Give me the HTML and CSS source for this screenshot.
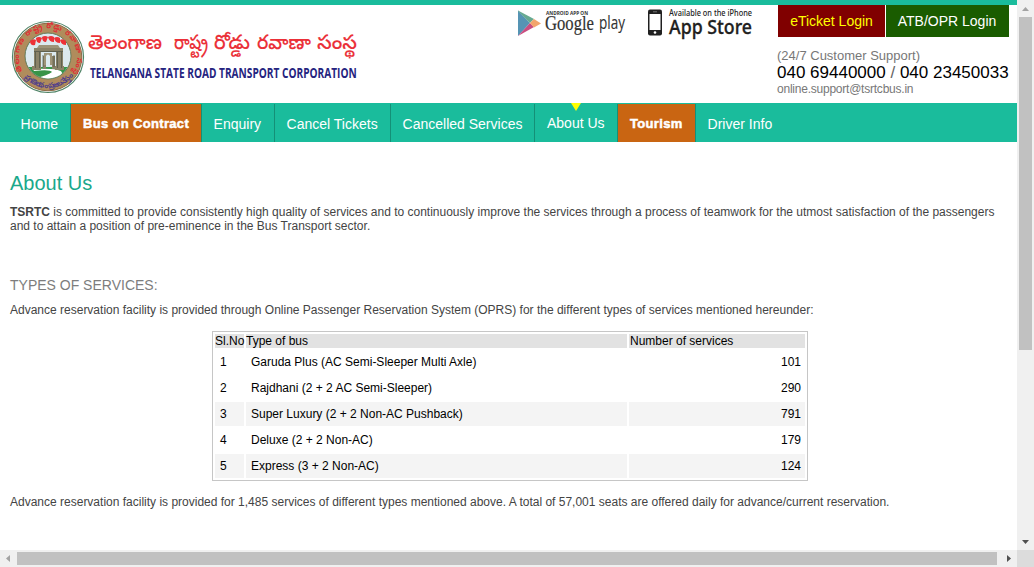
FILE: index.html
```html
<!DOCTYPE html>
<html lang="en">
<head>
<meta charset="utf-8">
<title>About Us - TSRTC</title>
<link rel="stylesheet" href="styles.css">
</head>
<body>
<div class="viewport">
<div class="page">
  <header class="header">
    <svg class="brand" width="370" height="98" viewBox="0 5 370 98">
      <defs>
        <path id="ringTop" d="M22.500 71 A29 29 0 1 1 73.500 71"/>
        <path id="ringBottom" d="M19 69.500 A32 32 0 0 0 77 69.500"/>
        <clipPath id="scene"><circle cx="48" cy="56" r="22.500"/></clipPath>
      </defs>
      <circle cx="48" cy="57" r="35.500" fill="#fff" stroke="#508467" stroke-width="1.200"/>
      <circle cx="48" cy="57" r="33.800" fill="#b08c5c" stroke="#8b6845"/>
      <circle cx="48" cy="56" r="23" fill="#dce9ee" stroke="#647b58"/>
      <g clip-path="url(#scene)">
        <path d="M24 67H72V80H24z" fill="#379447"/>
        <path d="M33 79Q49 75 52 72Q50 69 34 71L33 69Q62 68 62 73Q62 77 54 80z" fill="#fff"/>
        <path d="M34 48h29v4H34zM34 52h7v17h-7zM43 56h3v13h-3zM52 56h3v13h-3zM56 52h7v17h-7zM32 66h9v4h-9zM55 66h9v4h-9z" fill="#8a8268"/>
        <path d="M37 48h23l-2-3H39zM44 53h8v12h-2v-9q-2-3-4 0v9h-2z" fill="#9e9478"/>
        <path d="M35.500 52v16M39.500 52v16M43 55v12M54 55v12M57.500 52v16M61.500 52v16M34 51.500h29" stroke="#4d5345" stroke-width=".7"/>
      </g>
      <g fill="#ed3137"><path d="M30 41q3-3 6-1l-1 5q-5 1-5-4zM36 38q3-2 6 0l-2 5q-4 0-4-5zM42 37q3-2 6 0l-2 5q-4 0-4-5zM48 37q3-2 6 0v5q-5 0-6-5zM54 38q3-2 6 0v5q-5 0-6-5zM60 40q3-2 6 1v4q-5 0-6-5z"/></g>
      <text class="seal-text" fill="#e02d34"><textPath href="#ringTop" textLength="122">తెలంగాణ రాష్ట్ర రోడ్డు రవాణా సంస్థ</textPath></text>
      <text class="seal-text" fill="#51408b"><textPath href="#ringBottom" startOffset="8" textLength="56">ప్రగతి రథం · ప్రజల నేస్తం</textPath></text>
      <text class="telugu" x="88" y="49" textLength="74" lengthAdjust="spacingAndGlyphs">తెలంగాణ</text>
      <text class="telugu" x="174" y="49" textLength="34" lengthAdjust="spacingAndGlyphs">రాష్ట్ర</text>
      <text class="telugu" x="214" y="49" textLength="36" lengthAdjust="spacingAndGlyphs">రోడ్డు</text>
      <text class="telugu" x="257" y="49" textLength="54" lengthAdjust="spacingAndGlyphs">రవాణా</text>
      <text class="telugu" x="317" y="49" textLength="40" lengthAdjust="spacingAndGlyphs">సంస్థ</text>
      <text class="corp" transform="translate(90 78) scale(.78 1)" textLength="342" lengthAdjust="spacingAndGlyphs">TELANGANA STATE ROAD TRANSPORT CORPORATION</text>
    </svg>
    <svg class="stores" width="240" height="38" viewBox="516 5 240 38">
      <path d="M518 10.500V36l12-13z" fill="#5594b4"/>
      <path d="M518 10.500L534 19l-4 4-12-12z" fill="#67aa91"/>
      <path d="M518 36l12-13 4 4z" fill="#c94d80"/>
      <path d="M530 23l4-4 7 4.500-7 4z" fill="#f2a56c"/>
      <text class="android" x="546" y="14.500" textLength="42" lengthAdjust="spacingAndGlyphs">ANDROID APP ON</text>
      <text class="google" x="545" y="30" textLength="49" lengthAdjust="spacingAndGlyphs">Google</text>
      <text class="play" x="599" y="29" textLength="26" lengthAdjust="spacingAndGlyphs">play</text>
      <rect x="648" y="9.500" width="14" height="26" rx="2" fill="#202020"/>
      <rect x="649.500" y="14" width="11" height="16" fill="#fff"/>
      <path d="M653 11.800h4" stroke="#aaa" stroke-width=".6"/><circle cx="655" cy="32.500" r="1.300" fill="#fff"/>
      <text class="available" x="669" y="15.500" textLength="83" lengthAdjust="spacingAndGlyphs">Available on the iPhone</text>
      <text class="appstore" x="669" y="34" textLength="83" lengthAdjust="spacingAndGlyphs">App Store</text>
    </svg>
    <div class="account">
      <div class="logins"><a class="login eticket">eTicket Login</a><a class="login atb">ATB/OPR Login</a></div>
      <div class="support">(24/7 Customer Support)</div>
      <div class="phone">040 69440000 <span>/</span> 040 23450033</div>
      <div class="email">online.support@tsrtcbus.in</div>
    </div>
  </header>
  <nav class="nav">
    <a class="home">Home</a><a class="special contract">Bus on Contract</a><a class="enquiry">Enquiry</a><a class="cancel">Cancel Tickets</a><a class="cancelled">Cancelled Services</a><a class="about">About Us</a><a class="special tourism">Tourism</a><a class="driver">Driver Info</a>
  </nav>
  <main class="content">
    <h1>About Us</h1>
    <p class="intro"><b>TSRTC</b> is committed to provide consistently high quality of services and to continuously improve the services through a process of teamwork for the utmost satisfaction of the passengers<br>and to attain a position of pre-eminence in the Bus Transport sector.</p>
    <h2>TYPES OF SERVICES:</h2>
    <p class="lead">Advance reservation facility is provided through Online Passenger Reservation System (OPRS) for the different types of services mentioned hereunder:</p>
    <table class="services">
      <colgroup><col class="col-no"><col class="col-type"><col class="col-count"></colgroup>
      <tr class="head"><td>Sl.No</td><td>Type of bus</td><td>Number of services</td></tr>
      <tr><td>1</td><td>Garuda Plus (AC Semi-Sleeper Multi Axle)</td><td>101</td></tr>
      <tr><td>2</td><td>Rajdhani (2 + 2 AC Semi-Sleeper)</td><td>290</td></tr>
      <tr class="alt"><td>3</td><td>Super Luxury (2 + 2 Non-AC Pushback)</td><td>791</td></tr>
      <tr><td>4</td><td>Deluxe (2 + 2 Non-AC)</td><td>179</td></tr>
      <tr class="alt"><td>5</td><td>Express (3 + 2 Non-AC)</td><td>124</td></tr>
    </table>
    <p class="summary">Advance reservation facility is provided for 1,485 services of different types mentioned above. A total of 57,001 seats are offered daily for advance/current reservation.</p>
  </main>
</div>
<div class="vbar"><svg width="17" height="17"><path d="M5 11h7L8.500 7z" fill="#a3a3a3"/></svg><div class="vthumb"></div><svg class="down" width="17" height="17"><path d="M5 7h7l-3.500 4z" fill="#505050"/></svg></div>
<div class="hbar"><svg width="17" height="17"><path d="M10 5v7L6 8.500z" fill="#a3a3a3"/></svg><div class="hthumb"></div><svg class="right" width="17" height="17"><path d="M7 5v7l4-3.500z" fill="#505050"/></svg></div>
<div class="corner"></div>
</div>
</body>
</html>
```

FILE: styles.css
```css
* { box-sizing: border-box; }
body { margin: 0; overflow: hidden; font-family: "Liberation Sans", Arial, sans-serif; font-size: 12px; color: #444; background: #fff; }
.viewport { display: grid; grid-template: 550px 17px / 1017px 17px; width: 1034px; height: 567px; }
.page { overflow: hidden; }
.header { display: flex; height: 103px; border-top: 5px solid #1abc9c; }
.brand { display: block; margin-right: 146px; flex: none; overflow: visible; }
.telugu { font-family: "Noto Sans Telugu", "Noto Sans", sans-serif; font-size: 20px; font-weight: 500; fill: #eb3038; stroke: #eb3038; stroke-width: .1px; }
.corp { font-family: "Open Sans", sans-serif; font-size: 14px; font-weight: 700; fill: #25247f; }
.seal-text { font-family: "Noto Sans Telugu", "Noto Sans", sans-serif; font-size: 7.500px; font-weight: 700; }
.stores { flex: none; margin-right: 21px; overflow: visible; }
.android { font: 700 5px "Open Sans", sans-serif; fill: #333; }
.google { font: 20px "Liberation Serif", serif; fill: #333; stroke: #333; stroke-width: .2px; }
.play { font: 18px "Open Sans", sans-serif; fill: #333; stroke: #333; stroke-width: .1px; }
.available { font: 500 8px "Noto Sans", sans-serif; fill: #222; }
.appstore { font: 500 19.500px "Noto Sans", sans-serif; fill: #202020; stroke: #202020; stroke-width: .3px; }
.account { width: 240px; flex: none; }
.logins { display: flex; gap: 1px; padding-left: 1px; height: 32px; margin-bottom: 11px; }
.login { height: 32px; line-height: 32px; text-align: center; font-size: 14px; }
.eticket { width: 107px; background: #800000; color: #ff0; }
.atb { width: 123px; padding-right: 1px; background: #1a5c00; color: #fff; }
.support { font-size: 13px; line-height: 15px; color: #777; }
.phone { font-size: 17px; line-height: 19px; color: #000; white-space: nowrap; }
.phone span { color: #666; }
.email { font-size: 12px; line-height: 14px; letter-spacing: -.23px; color: #777; }
.nav { display: flex; height: 39px; padding: 1px 0 0 9px; background: #1abc9c; }
.nav a { height: 38px; line-height: 40px; padding-left: 11.600px; border-right: 1px solid #149077; color: #fff; font-size: 14px; white-space: nowrap; }
.nav .home { width: 62px; }
.nav .contract { width: 131px; }
.nav .enquiry { width: 73px; }
.nav .cancel { width: 116px; }
.nav .cancelled { width: 144px; }
.nav .about { position: relative; width: 83px; line-height: 38px; padding-left: 12px; }
.nav .about::before { content: ""; position: absolute; left: 36px; top: -1px; border: 5px solid transparent; border-top: 8px solid #ff0; border-bottom: 0; }
.nav .tourism { width: 78px; }
.nav .driver { border: 0; }
.nav .special { padding-left: 12px; background: #c96512; font-size: 13px; font-weight: 700; -webkit-text-stroke: .5px #fff; letter-spacing: .33px; }
.content { padding: 0 10px; }
h1, h2, p { margin: 0; font-weight: 400; white-space: nowrap; }
h1 { margin-top: 30px; font-size: 20px; line-height: 23px; color: #1aa88b; }
.intro { margin-top: 10px; line-height: 14px; }
h2 { margin-top: 44px; font-size: 14px; line-height: 16px; color: #7d7d7d; }
.lead { margin-top: 10px; line-height: 14px; }
.services { width: 596px; height: 150px; margin: 14px 0 0 202px; table-layout: fixed; border-collapse: separate; border-spacing: 2px; border: 1px solid #c6c6c6; color: #000; }
.col-no { width: 29px; }
.col-type { width: 381px; }
.services td { height: 24px; padding: 0 5px; line-height: 14px; white-space: nowrap; }
.services td:last-child { padding-right: 4px; text-align: right; }
.services .head td { height: 14px; padding: 0; text-align: left; background: #e2e2e2; }
.services .head td:last-child { padding-left: 1px; }
.services .alt td { background: #f4f4f4; }
.summary { margin-top: 14px; line-height: 14px; }
.vbar { display: flex; flex-direction: column; background: #f0f0f0; }
.vbar svg, .hbar svg { display: block; flex: none; }
.vthumb { width: 13px; height: 333px; margin-left: 2px; background: #c1c1c1; }
.down { margin-top: auto; }
.hbar { display: flex; background: #f0f0f0; }
.hthumb { width: 980px; height: 13px; margin-top: 2px; background: #c1c1c1; }
.right { margin-left: auto; }
.corner { background: #dcdcdc; }
```
